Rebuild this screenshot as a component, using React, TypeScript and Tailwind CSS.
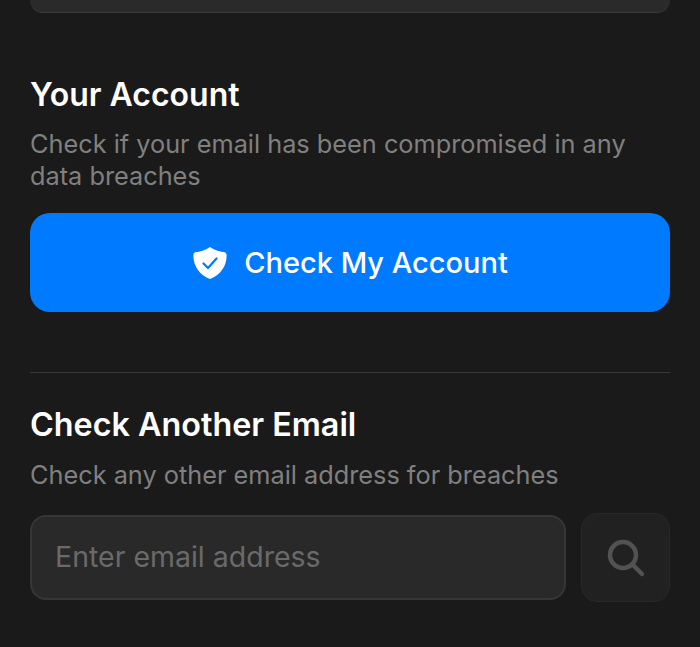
export default function App() {
  return (
    <div className="flex h-[647px] w-[700px] flex-col overflow-hidden bg-[#1a1a1a] px-[30px] font-['Inter',sans-serif]">
      <div className="h-[13px] shrink-0 rounded-b-[16px] border-b border-[#3a3a3a] bg-[#2a2a2a]" />
      <h2 className="mt-[62px] text-[32px] leading-[40px] font-semibold text-white">Your Account</h2>
      <p className="mt-[13px] text-[25.3px] leading-[32px] text-[#808080]">
        Check if your email has been compromised in any data breaches
      </p>
      <button className="mt-[21px] flex h-[99px] shrink-0 items-center justify-center gap-[16px] rounded-[20px] bg-[#007aff] text-[29px] font-medium text-white">
        <svg width="36" height="34" viewBox="0 0 36 34">
          <path
            d="M18 1C23 4.5 28 5.8 33 6.2C34.4 7 34.6 8 34.6 10C34.4 20 29 28.5 18 33C7 28.5 1.6 20 1.4 10C1.4 8 1.6 7 3 6.2C8 5.8 13 4.5 18 1Z"
            fill="#fff"
          />
          <path d="M11.5 17.5L16 22L24.5 12.5" fill="none" stroke="#007aff" strokeWidth="2.2" strokeLinecap="round" strokeLinejoin="round" />
        </svg>
        Check My Account
      </button>
      <div className="mt-[60px] h-px shrink-0 bg-[#3a3a3a]" />
      <h2 className="mt-[32px] text-[32.3px] leading-[40px] font-semibold text-white">Check Another Email</h2>
      <p className="mt-[14px] text-[25.3px] leading-[32px] text-[#808080]">Check any other email address for breaches</p>
      <div className="mt-[24px] flex gap-[15px]">
        <div className="flex h-[85px] flex-1 items-center rounded-[16px] border-2 border-[#363636] bg-[#292929] px-[23px] text-[28.5px] text-[#6a6a6a]">
          Enter email address
        </div>
        <button className="flex h-[89px] w-[89px] -translate-y-[2px] items-center justify-center rounded-[16px] border border-[#282828] bg-[#212121]">
          <svg width="40" height="40" viewBox="0 0 40 40" fill="none" stroke="#525252" strokeWidth="4.5" strokeLinecap="round">
            <circle cx="17" cy="17" r="13" />
            <path d="M27 27L36 36" />
          </svg>
        </button>
      </div>
    </div>
  );
}
